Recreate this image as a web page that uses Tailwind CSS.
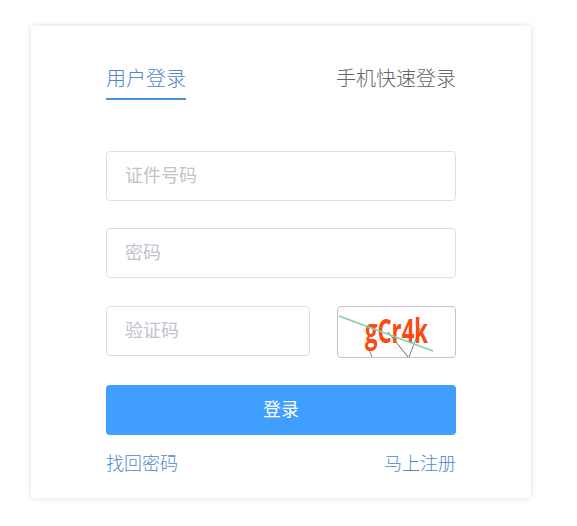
<!DOCTYPE html>
<html lang="zh">
<head>
<meta charset="utf-8">
<script src="https://cdn.jsdelivr.net/npm/@tailwindcss/browser@4"></script>
</head>
<body class="bg-white font-['Liberation_Sans','Noto_Sans_CJK_SC',sans-serif]">
<div class="w-[577px] h-[526px] pt-[26px] pl-[31px]">
  <div class="w-[500px] h-[472px] bg-white shadow-[0_0_6px_rgba(0,0,0,0.14)] px-[75px] pt-[39px]">
    <div class="flex justify-between items-start h-[35px] text-[20px] leading-[28px] font-light">
      <div class="w-[80px] h-[35px] border-b-2 border-[#4a90d9] text-[#4f86cc]">用户登录</div>
      <div class="text-[#666666]">手机快速登录</div>
    </div>
    <div class="mt-[51px] flex flex-col">
      <div class="h-[50px] border border-[#dcdfe6] rounded-[4px] pl-[18px] flex items-center text-[18px] text-[#c0c4cc]">证件号码</div>
      <div class="h-[50px] mt-[27px] border border-[#dcdfe6] rounded-[4px] pl-[18px] flex items-center text-[18px] text-[#c0c4cc]">密码</div>
      <div class="mt-[28px] flex justify-between items-start h-[52px]">
        <div class="w-[204px] h-[50px] border border-[#dcdfe6] rounded-[4px] pl-[18px] flex items-center text-[18px] text-[#c0c4cc]">验证码</div>
        <div class="relative w-[119px] h-[52px] border border-[#c4c4c8] rounded-[4px] overflow-hidden">
          <svg class="absolute inset-0" width="117" height="50" viewBox="0 0 117 50">
            <line x1="29" y1="38" x2="34" y2="50" stroke="#8a7a80" stroke-width="1"/>
            <line x1="50" y1="25" x2="70" y2="50" stroke="#8f5a5a" stroke-width="1"/>
            <line x1="71" y1="50" x2="82" y2="21" stroke="#5f8a90" stroke-width="1"/>
            <text transform="translate(27 36) scale(1 1.16)" x="0" y="0" textLength="63" lengthAdjust="spacingAndGlyphs" font-family="Open Sans" font-weight="700" font-size="30" fill="#fa4a10">gCr4k</text>
            <line x1="1" y1="9" x2="95" y2="44" stroke="#7fd3a8" stroke-width="1.6"/>
          </svg>
        </div>
      </div>
      <div class="mt-[27px] h-[50px] rounded-[4px] bg-[#409eff] text-white text-[18px] flex items-center justify-center">登录</div>
      <div class="mt-[16px] flex justify-between text-[#4f86cc] text-[18px] leading-[26px] font-light">
        <span>找回密码</span>
        <span>马上注册</span>
      </div>
    </div>
  </div>
</div>
</body>
</html>
